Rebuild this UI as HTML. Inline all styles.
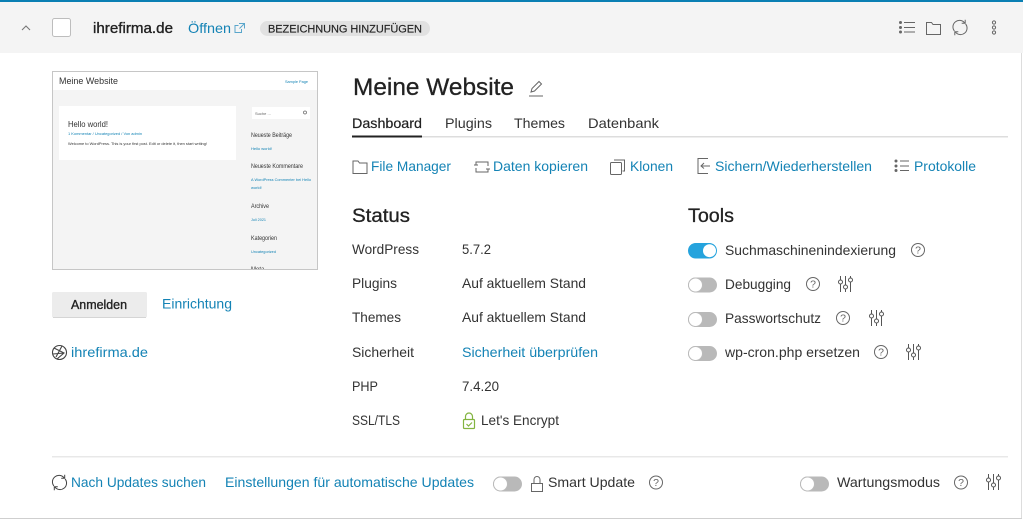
<!DOCTYPE html>
<html lang="de"><head><meta charset="utf-8"><title>Meine Website</title>
<style>
html,body{margin:0;padding:0;background:#fff;width:1023px;height:522px;overflow:hidden}
svg{display:block}
text{font-family:"Liberation Sans","DejaVu Sans",sans-serif;font-size:14px;fill:#333}
.l{fill:#1483b5}
.sb{stroke:#222;stroke-width:.35px;fill:#222}
</style></head><body>
<svg width="1023" height="522" viewBox="0 0 1023 522" xmlns="http://www.w3.org/2000/svg">
<defs>
<g id="q"><circle cx="7" cy="7" r="6.5" fill="none" stroke="#666"/><text x="7" y="10.700" text-anchor="middle" style="font-size:10.500px;fill:#666">?</text></g>
<g id="s" fill="none" stroke="#555" stroke-width="1">
<path d="M2.500 0v4M2.500 8v8M7.500 0v9M7.500 13v3M12.500 0v2M12.500 6v10"/><circle cx="2.500" cy="6" r="2"/><circle cx="7.500" cy="11" r="2"/><circle cx="12.500" cy="4" r="2"/></g>
<g id="off"><rect width="29" height="15" rx="7.500" fill="#b9b9b9"/><circle cx="7.500" cy="7.500" r="7" fill="#fff" stroke="#bbb"/></g>
<path id="r" d="M954.400 31A6.500 6.500 0 0 1 964.500 22.800M965.200 19.800v3.500h-3.500M965.600 24A6.500 6.500 0 0 1 955.500 32.200M954.800 35.200v-3.500h3.500" fill="none"/>
<filter id="b" x="0" y="0" width="100%" height="100%"><feGaussianBlur stdDeviation="0.3"/></filter>
</defs>
<rect width="1023" height="522" fill="#fff"/>
<rect y="0" width="1023" height="53" fill="#f4f4f4"/>
<rect y="0" width="1023" height="2" fill="#0a7fb3"/>
<rect x="1021" y="53" width="1" height="465" fill="#ddd"/>
<rect y="518" width="1022" height="1" fill="#cfcfcf"/>

<!-- header -->
<path d="M22 30l4-4 4 4" fill="none" stroke="#777" stroke-width="1.100"/>
<rect x="52.500" y="18.500" width="18" height="18" rx="2" fill="#fff" stroke="#bdbdbd"/>
<text x="93" y="33" textLength="80" lengthAdjust="spacingAndGlyphs" class="sb" style="font-size:14.500px">ihrefirma.de</text>
<text x="188" y="33" textLength="43" lengthAdjust="spacingAndGlyphs" class="l">Öffnen</text>
<g fill="none" stroke="#5aa6cb"><path d="M241.500 29v3.500h-6.500v-7h3.500"/><path d="M239 23.500h5.500v5M244.500 23.500l-5 5"/></g>
<rect x="260" y="21" width="170" height="15" rx="7.500" fill="#e1e1e1"/>
<text x="268" y="32.500" textLength="154" lengthAdjust="spacing" style="font-size:11px;fill:#222;stroke:#222;stroke-width:.15px">BEZEICHNUNG HINZUFÜGEN</text>
<g stroke="#666" fill="#666"><circle cx="900.500" cy="22.500" r="1"/><circle cx="900.500" cy="27.500" r="1"/><circle cx="900.500" cy="32" r="1"/><path d="M904 22.500h11M904 27.500h11M904 32h11" fill="none"/></g>
<path d="M926.500 22.500h5l1.500 2h7.500v10h-14z" fill="none" stroke="#666"/>
<use href="#r" stroke="#666"/>
<g fill="none" stroke="#666"><circle cx="994" cy="22.500" r="1.600"/><circle cx="994" cy="27.500" r="1.600"/><circle cx="994" cy="32.500" r="1.600"/></g>

<!-- thumbnail -->
<rect x="52.500" y="71.500" width="265" height="198" fill="#f4f4f4" stroke="#c6c6c6"/>
<rect x="53" y="72" width="264" height="18" fill="#fff"/>
<rect x="59" y="106" width="177" height="54" fill="#fff"/>
<rect x="252" y="107" width="58" height="12" fill="#fff"/>
<g filter="url(#b)">
<text x="59" y="84" textLength="59" lengthAdjust="spacingAndGlyphs" style="font-size:9px">Meine Website</text>
<text x="285" y="83" textLength="23" lengthAdjust="spacingAndGlyphs" class="l" style="font-size:4px">Sample Page</text>
<text x="68" y="127" textLength="40" lengthAdjust="spacingAndGlyphs" style="font-size:8px">Hello world!</text>
<text x="68" y="135" textLength="74" lengthAdjust="spacingAndGlyphs" class="l" style="font-size:4px">1 Kommentar / Uncategorized / Von admin</text>
<text x="68" y="145" textLength="139" lengthAdjust="spacingAndGlyphs" style="font-size:4px">Welcome to WordPress. This is your first post. Edit or delete it, then start writing!</text>
<text x="255" y="115" style="font-size:4px;fill:#666">Suche ...</text>
<circle cx="305" cy="112.500" r="1.500" fill="none" stroke="#666" stroke-width=".7"/>
<text x="251" y="137" textLength="41" lengthAdjust="spacingAndGlyphs" style="font-size:6px">Neueste Beiträge</text>
<text x="251" y="150" textLength="21" lengthAdjust="spacingAndGlyphs" class="l" style="font-size:4px">Hello world!</text>
<text x="251" y="168" textLength="52" lengthAdjust="spacingAndGlyphs" style="font-size:6px">Neueste Kommentare</text>
<text x="251" y="181" textLength="60" lengthAdjust="spacingAndGlyphs" class="l" style="font-size:4px">A WordPress Commenter bei Hello</text>
<text x="251" y="189" class="l" style="font-size:4px">world!</text>
<text x="251" y="208" textLength="18" lengthAdjust="spacingAndGlyphs" style="font-size:6px">Archive</text>
<text x="251" y="221" textLength="15" lengthAdjust="spacingAndGlyphs" class="l" style="font-size:4px">Juli 2021</text>
<text x="251" y="240" textLength="26" lengthAdjust="spacingAndGlyphs" style="font-size:6px">Kategorien</text>
<text x="251" y="253" textLength="25" lengthAdjust="spacingAndGlyphs" class="l" style="font-size:4px">Uncategorized</text>
<text x="251" y="271" style="font-size:6px">Meta</text>
</g>
<rect x="52" y="270" width="266" height="3" fill="#fff"/>
<rect x="52" y="269" width="266" height="1" fill="#c6c6c6"/>

<!-- left buttons -->
<rect x="52" y="292" width="95" height="25.500" rx="1.500" fill="#ececec"/>
<rect x="53" y="317" width="93" height="1" fill="#d5d5d5"/>
<text x="71" y="309" textLength="56" lengthAdjust="spacingAndGlyphs" class="sb" style="font-size:12.500px">Anmelden</text>
<text x="162" y="308.500" textLength="70" lengthAdjust="spacingAndGlyphs" class="l">Einrichtung</text>
<g fill="none" stroke="#444" stroke-width="1.100"><circle cx="59.500" cy="352.500" r="7"/><path d="M54 348l10 5-7 6M62 346l-6 11M53 354l11-1"/></g>
<text x="71" y="357" textLength="77" lengthAdjust="spacingAndGlyphs" class="l">ihrefirma.de</text>

<!-- title and tabs -->
<text x="353" y="95" textLength="161" lengthAdjust="spacingAndGlyphs" class="sb" style="font-size:24px;stroke-width:.3px">Meine Website</text>
<g fill="none" stroke="#666"><path d="M531 92l1-3.500 7-7 2.500 2.500-7 7z"/><path d="M529 96h14"/></g>
<rect x="352" y="136" width="656" height="1.500" fill="#ddd"/>
<rect x="352" y="135.500" width="70" height="2" fill="#222"/>
<text x="352" y="128" textLength="70" lengthAdjust="spacingAndGlyphs" class="sb" style="stroke-width:.2px">Dashboard</text>
<text x="445" y="128" textLength="47" lengthAdjust="spacingAndGlyphs">Plugins</text>
<text x="514" y="128" textLength="51" lengthAdjust="spacingAndGlyphs">Themes</text>
<text x="588" y="128" textLength="71" lengthAdjust="spacingAndGlyphs">Datenbank</text>

<!-- action links -->
<path d="M353 161h5l1.500 2h7.500v10.500h-14z" fill="none" stroke="#666"/>
<text x="371" y="171" textLength="80" lengthAdjust="spacingAndGlyphs" class="l">File Manager</text>
<g fill="none" stroke="#666"><path d="M476 165v-3h12v4M488 169v3h-12v-4"/><path d="M474 165h4M486 169h4"/></g>
<text x="493" y="171" textLength="95" lengthAdjust="spacingAndGlyphs" class="l">Daten kopieren</text>
<g fill="none" stroke="#666"><rect x="610.500" y="162.500" width="11" height="12" rx="1"/><path d="M614 160h10.500v11h-2"/></g>
<text x="630" y="171" textLength="43" lengthAdjust="spacingAndGlyphs" class="l">Klonen</text>
<g fill="none" stroke="#666"><path d="M708 158.500h-10v15h10"/><path d="M704 163l-3 3 3 2.500M701 166h9"/></g>
<text x="715" y="171" textLength="157" lengthAdjust="spacingAndGlyphs" class="l">Sichern/Wiederherstellen</text>
<g stroke="#666" fill="#666"><circle cx="896" cy="161" r="1"/><circle cx="896" cy="166" r="1"/><circle cx="896" cy="170.500" r="1"/><path d="M900 161h9M900 166h9M900 170.500h9" fill="none"/></g>
<text x="914" y="171" textLength="62" lengthAdjust="spacingAndGlyphs" class="l">Protokolle</text>

<!-- status -->
<text x="352" y="222" textLength="58" lengthAdjust="spacingAndGlyphs" class="sb" style="font-size:19px;stroke-width:.3px">Status</text>
<text x="352" y="254" textLength="67" lengthAdjust="spacingAndGlyphs">WordPress</text>
<text x="462" y="254" textLength="29" lengthAdjust="spacingAndGlyphs">5.7.2</text>
<text x="352" y="288" textLength="45" lengthAdjust="spacingAndGlyphs">Plugins</text>
<text x="462" y="288" textLength="124" lengthAdjust="spacingAndGlyphs">Auf aktuellem Stand</text>
<text x="352" y="322" textLength="49" lengthAdjust="spacingAndGlyphs">Themes</text>
<text x="462" y="322" textLength="124" lengthAdjust="spacingAndGlyphs">Auf aktuellem Stand</text>
<text x="352" y="357" textLength="62" lengthAdjust="spacingAndGlyphs">Sicherheit</text>
<text x="462" y="357" textLength="136" lengthAdjust="spacingAndGlyphs" class="l">Sicherheit überprüfen</text>
<text x="352" y="391" textLength="26" lengthAdjust="spacingAndGlyphs" style="font-size:13.500px">PHP</text>
<text x="462" y="391" textLength="37" lengthAdjust="spacingAndGlyphs">7.4.20</text>
<text x="352" y="425" textLength="48" lengthAdjust="spacingAndGlyphs" style="font-size:13.500px">SSL/TLS</text>
<g fill="none" stroke="#83b440" stroke-width="1.200"><rect x="463.500" y="419.500" width="11" height="9" rx="1"/><path d="M465.500 419.500v-3a3.500 3.500 0 0 1 7 0v3"/><path d="M466.500 424l2 2 3.500-3.500"/></g>
<text x="481" y="425" textLength="78" lengthAdjust="spacingAndGlyphs">Let's Encrypt</text>

<!-- tools -->
<text x="688" y="222" textLength="46" lengthAdjust="spacingAndGlyphs" class="sb" style="font-size:19px;stroke-width:.3px">Tools</text>
<rect x="688" y="243" width="29" height="15.500" rx="7.700" fill="#25a3dd"/><circle cx="709.500" cy="250.700" r="6.500" fill="#fff"/>
<text x="725" y="255" textLength="171" lengthAdjust="spacingAndGlyphs">Suchmaschinenindexierung</text>
<use href="#q" x="911" y="243"/>
<use href="#off" x="688" y="277.500"/>
<text x="725" y="289" textLength="66" lengthAdjust="spacingAndGlyphs">Debugging</text>
<use href="#q" x="806" y="277"/>
<use href="#s" x="838" y="276"/>
<use href="#off" x="688" y="312"/>
<text x="725" y="323" textLength="96" lengthAdjust="spacingAndGlyphs">Passwortschutz</text>
<use href="#q" x="836" y="311"/>
<use href="#s" x="869" y="310"/>
<use href="#off" x="688" y="346"/>
<text x="725" y="357" textLength="135" lengthAdjust="spacingAndGlyphs">wp-cron.php ersetzen</text>
<use href="#q" x="874" y="345"/>
<use href="#s" x="906" y="344"/>

<!-- footer -->
<rect x="52" y="456" width="956" height="1.500" fill="#e8e8e8"/>
<use href="#r" stroke="#444" x="-900.500" y="455"/>
<text x="71" y="487" textLength="135" lengthAdjust="spacingAndGlyphs" class="l">Nach Updates suchen</text>
<text x="225" y="487" textLength="249" lengthAdjust="spacingAndGlyphs" class="l">Einstellungen für automatische Updates</text>
<use href="#off" x="493" y="476.500"/>
<g fill="none" stroke="#666"><rect x="531.500" y="483.500" width="11" height="8"/><path d="M534 483.500v-4a3 3 0 0 1 6 0v4"/></g>
<text x="548" y="487" textLength="87" lengthAdjust="spacingAndGlyphs">Smart Update</text>
<use href="#q" x="649" y="475.500"/>
<use href="#off" x="800" y="476.500"/>
<text x="837" y="487" textLength="103" lengthAdjust="spacingAndGlyphs">Wartungsmodus</text>
<use href="#q" x="954" y="475.500"/>
<use href="#s" x="986" y="474"/>
</svg>
</body></html>
